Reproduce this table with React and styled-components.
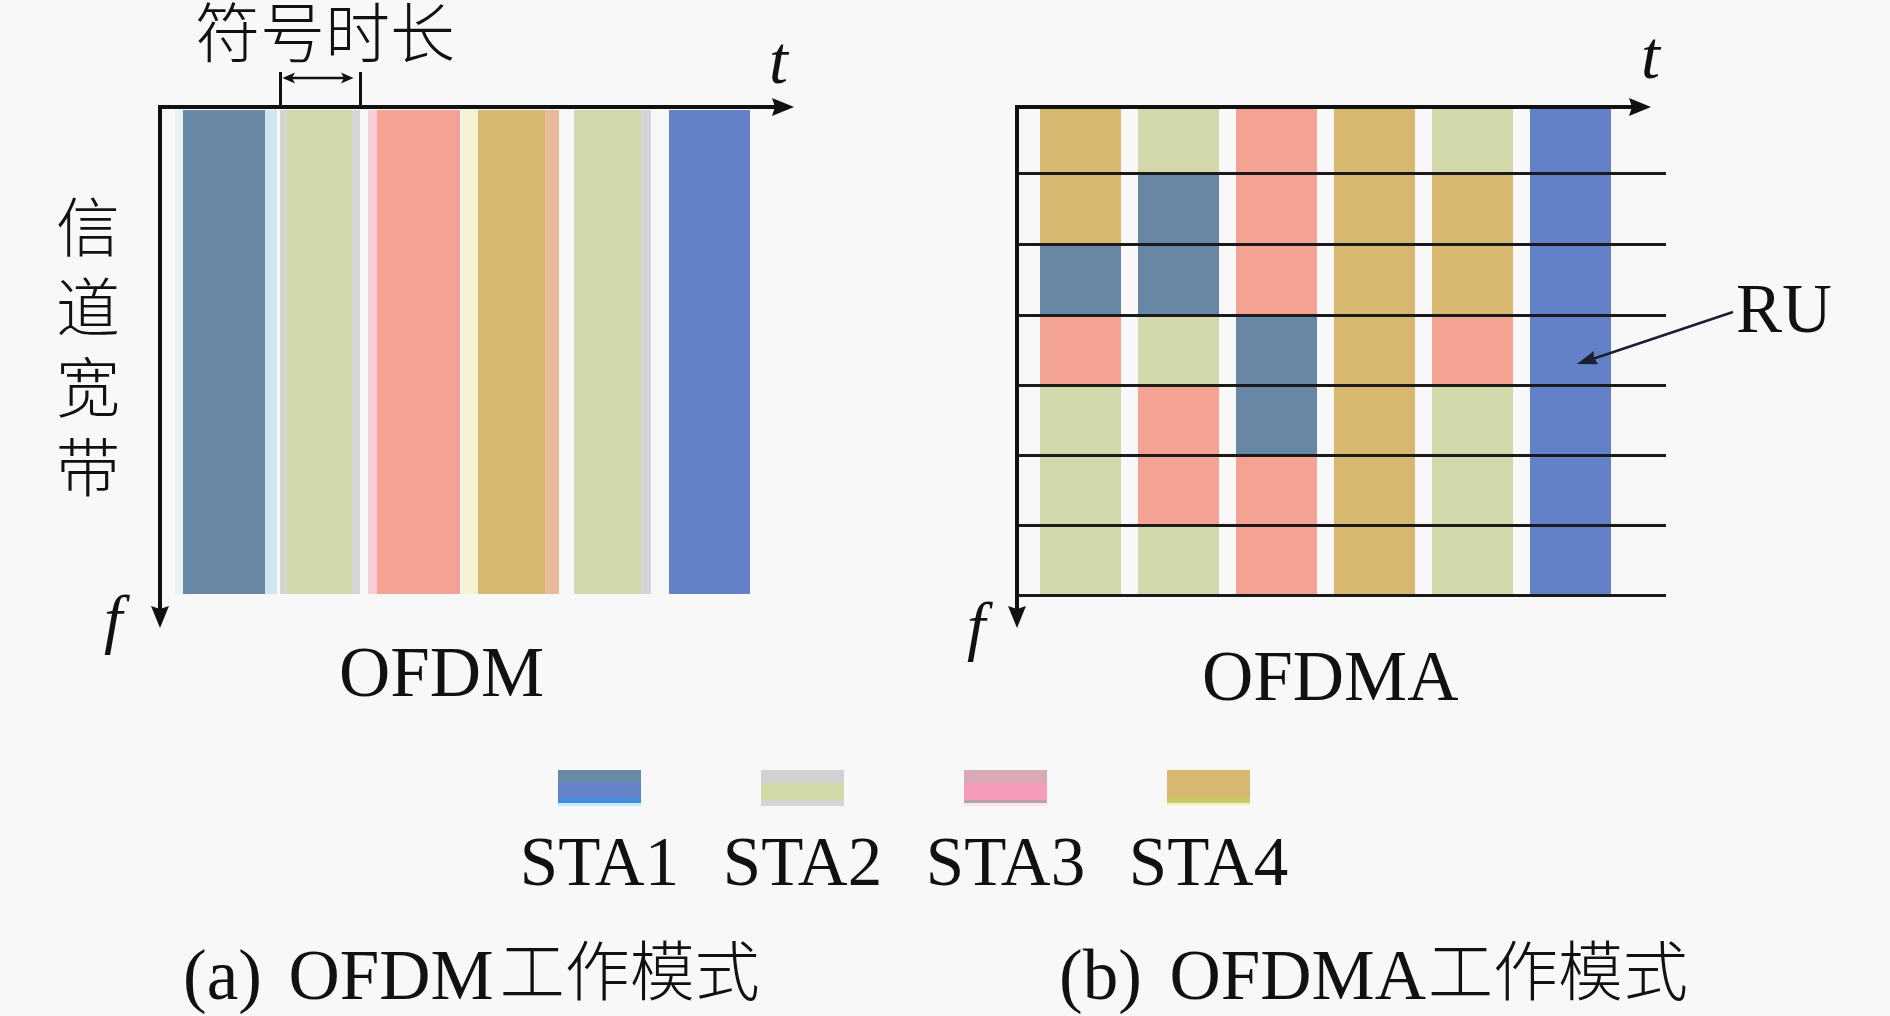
import React from 'react';
import styled, { createGlobalStyle } from 'styled-components';

// palette picked from the reference figure
const C = {
  steel: '#6787a5',
  corn: '#6381c8',
  sage: '#d3d8aa',
  salmon: '#f4a392',
  gold: '#d8b86f',
  ink: '#111',
  line: '#1b1b1b',
};

const GlobalStyle = createGlobalStyle`
  html, body {
    margin: 0;
    padding: 0;
    background: #f8f8f8;
  }
  body {
    font-family: 'Liberation Serif', 'Times New Roman', serif;
    color: ${C.ink};
  }
`;

const Page = styled.div`
  width: 1890px;
  height: 1016px;
  overflow: hidden;
  display: flex;
  flex-direction: column;
`;

const ChartsRow = styled.div`
  display: grid;
  grid-template-columns: 945px 945px;
  height: 720px;
  flex: none;
`;

const Figure = styled.div`
  position: relative;
  display: flex;
  align-items: flex-start;
`;

const AxisLabels = styled.div`
  width: ${(p) => p.$w}px;
  flex: none;
  display: flex;
  flex-direction: column;
  align-items: flex-start;
`;

// vertical axis title, one character under the other
const YLabel = styled.div`
  margin: 195px 0 0 56px;
  writing-mode: vertical-rl;
  text-orientation: upright;
  font-family: 'Noto Sans CJK SC', sans-serif;
  font-weight: 300;
  font-size: 64px;
  line-height: 64px;
  letter-spacing: 16px;
`;

const MathVar = styled.span`
  display: block;
  font-style: italic;
  font-size: 66px;
  line-height: 66px;
  margin-top: ${(p) => p.$top}px;
  margin-left: ${(p) => p.$left}px;
`;

const ChartColumn = styled.div`
  width: ${(p) => p.$w}px;
  flex: none;
  display: flex;
  flex-direction: column;
  align-items: flex-start;
`;

const Header = styled.div`
  height: 105px;
  flex: none;
  display: flex;
  align-items: flex-start;
`;

const TitleBlock = styled.div`
  width: 262px;
  margin-left: 37px;
  display: flex;
  flex-direction: column;
`;

const Title = styled.div`
  font-family: 'Noto Sans CJK SC', sans-serif;
  font-weight: 300;
  font-size: 65px;
  line-height: 58px;
  white-space: nowrap;
`;

const Bracket = styled.div`
  box-sizing: border-box;
  width: 83px;
  height: 33px;
  margin: 14px 0 0 84px;
  border-left: 3px solid ${C.ink};
  border-right: 3px solid ${C.ink};
  svg {
    display: block;
  }
`;

const TimeLabel = styled.span`
  display: block;
  font-style: italic;
  font-size: 68px;
  line-height: 68px;
  margin-top: ${(p) => p.$top}px;
  margin-left: ${(p) => p.$left}px;
`;

const Plot = styled.div`
  position: relative;
  box-sizing: border-box;
  width: 618px;
  height: 505px;
  flex: none;
  border-top: 4px solid ${C.ink};
  border-left: 4px solid ${C.ink};
`;

const ArrowRight = styled.svg`
  position: absolute;
  top: -11px;
  left: calc(100% - 4px);
`;

const ArrowDown = styled.svg`
  position: absolute;
  left: -11px;
  top: calc(100% - 4px);
`;

const Bars = styled.div`
  display: flex;
  height: 484px;
  padding-top: 1px;
`;

const Bar = styled.div`
  flex: none;
  width: ${(p) => p.$w}px;
  margin-left: ${(p) => p.$gap}px;
  background: ${(p) => p.$color};
  box-shadow: ${(p) => `${-p.$l[0]}px 0 0 ${p.$l[1]}, ${p.$r[0]}px 0 0 ${p.$r[1]}`};
`;

const GridRows = styled.div`
  width: 647px;
  display: flex;
  flex-direction: column;
`;

const GridRow = styled.div`
  height: ${(p) => p.$h}px;
  display: flex;
  gap: 17px;
  padding-left: 21px;
  border-bottom: 3px solid ${C.line};
`;

const Cell = styled.div`
  width: 81px;
  flex: none;
  background: ${(p) => p.$color};
`;

const ModeName = styled.div`
  font-size: 71px;
  line-height: 71px;
  margin-top: ${(p) => p.$top}px;
  margin-left: ${(p) => p.$left}px;
  white-space: nowrap;
`;

const Side = styled.div`
  margin: 275px 0 0 70px;
  font-size: 69px;
  line-height: 69px;
`;

const Callout = styled.svg`
  position: absolute;
  left: 615px;
  top: 300px;
`;

const LegendRow = styled.div`
  display: flex;
  padding: 50px 0 0 498px;
  flex: none;
`;

const LegendItem = styled.div`
  width: 203px;
  display: flex;
  flex-direction: column;
  align-items: center;
`;

const Swatch = styled.div`
  width: 83px;
  height: 36px;
  background: ${(p) => p.$fill};
`;

const LegendText = styled.div`
  margin-top: 22px;
  font-size: 69px;
  line-height: 69px;
`;

const CaptionRow = styled.div`
  display: grid;
  grid-template-columns: 876px auto;
  padding-left: 183px;
  margin-top: 43px;
`;

const Caption = styled.div`
  font-size: 71px;
  line-height: 71px;
  white-space: nowrap;
  word-spacing: ${(p) => p.$ws}px;
`;

const Cjk = styled.span`
  font-family: 'Noto Sans CJK SC', sans-serif;
  font-weight: 300;
  font-size: 65px;
  line-height: 0;
  vertical-align: 4px;
  margin-left: ${(p) => p.$gap || 0}px;
`;

const BARS = [
  { w: 82, gap: 21, color: C.steel, l: [8, '#e9f3f6'], r: [12, '#cde8f0'] },
  { w: 65, gap: 22, color: C.sage, l: [7, '#d6d6d6'], r: [8, '#d6d6d6'] },
  { w: 80, gap: 25, color: C.salmon, l: [9, '#f8cfdb'], r: [3, '#f39ab1'] },
  { w: 67, gap: 21, color: C.gold, l: [17, '#f5f4d2'], r: [14, '#e9bb9b'] },
  { w: 67, gap: 29, color: C.sage, l: [0, 'transparent'], r: [10, '#d6d6d6'] },
  { w: 81, gap: 28, color: C.corn, l: [0, 'transparent'], r: [0, 'transparent'] },
];

const S = C.steel, G = C.sage, P = C.salmon, Y = C.gold, B = C.corn;
const GRID = [
  { h: 63, cells: [Y, G, P, Y, G, B] },
  { h: 68, cells: [Y, S, P, Y, Y, B] },
  { h: 68, cells: [S, S, P, Y, Y, B] },
  { h: 67, cells: [P, G, S, Y, P, B] },
  { h: 67, cells: [G, P, S, Y, G, B] },
  { h: 67, cells: [G, P, P, Y, G, B] },
  { h: 67, cells: [G, G, P, Y, G, B] },
];

const LEGEND = [
  {
    name: 'STA1',
    fill: 'linear-gradient(180deg, #6a89a6 0 33%, #6581c8 33% 78%, #3f8fd8 78% 92%, #c4e8f5 92%)',
  },
  {
    name: 'STA2',
    fill: 'linear-gradient(180deg, #d1d1d1 0 35%, #d3d8a9 35% 84%, #d5d5d5 84%)',
  },
  {
    name: 'STA3',
    fill: 'linear-gradient(180deg, #d9aab6 0 35%, #f69bb9 35% 84%, #b3a5aa 84% 92%, #fbe3ea 92%)',
  },
  {
    name: 'STA4',
    fill: 'linear-gradient(180deg, #d8b870 0 78%, #c6cb63 78% 92%, #f7f2c8 92%)',
  },
];

const AxisArrows = () => (
  <>
    <ArrowRight width="22" height="18" viewBox="0 0 22 18">
      <path d="M0 0 L22 9 L0 18 L3 9 Z" fill={C.ink} />
    </ArrowRight>
    <ArrowDown width="18" height="22" viewBox="0 0 18 22">
      <path d="M0 0 L9 22 L18 0 L9 3 Z" fill={C.ink} />
    </ArrowDown>
  </>
);

const OfdmChart = () => (
  <Figure>
    <AxisLabels $w={158}>
      <YLabel>信道宽带</YLabel>
      <MathVar $top={71} $left={104}>f</MathVar>
    </AxisLabels>
    <ChartColumn $w={787}>
      <Header>
        <TitleBlock>
          <Title>符号时长</Title>
          <Bracket>
            <svg width="77" height="12" viewBox="0 0 77 12">
              <line x1="8" y1="6" x2="64" y2="6" stroke={C.ink} strokeWidth="2.6" />
              <path d="M0.5 6 L13 0.5 L10 6 L13 11.5 Z" fill={C.ink} />
              <path d="M71.5 6 L59 0.5 L62 6 L59 11.5 Z" fill={C.ink} />
            </svg>
          </Bracket>
        </TitleBlock>
        <TimeLabel $top={26} $left={312}>t</TimeLabel>
      </Header>
      <Plot>
        <Bars>
          {BARS.map((b, i) => (
            <Bar key={i} $w={b.w} $gap={b.gap} $color={b.color} $l={b.l} $r={b.r} />
          ))}
        </Bars>
        <AxisArrows />
      </Plot>
      <ModeName $top={27} $left={181}>OFDM</ModeName>
    </ChartColumn>
  </Figure>
);

const OfdmaChart = () => (
  <Figure>
    <AxisLabels $w={70}>
      <MathVar $top={593} $left={22}>f</MathVar>
    </AxisLabels>
    <ChartColumn $w={651}>
      <Header>
        <TimeLabel $top={21} $left={626}>t</TimeLabel>
      </Header>
      <Plot>
        <GridRows>
          {GRID.map((row, r) => (
            <GridRow key={r} $h={row.h}>
              {row.cells.map((c, i) => (
                <Cell key={i} $color={c} />
              ))}
            </GridRow>
          ))}
        </GridRows>
        <AxisArrows />
      </Plot>
      <ModeName $top={31} $left={187}>OFDMA</ModeName>
    </ChartColumn>
    <Side>RU</Side>
    <Callout width="190" height="80" viewBox="0 0 190 80">
      <line x1="173" y1="12" x2="34" y2="58.5" stroke="#1a2030" strokeWidth="2.6" />
      <path d="M17 64 L38.2 64.3 L33.8 57.6 L33.8 51.1 Z" fill="#1a2030" />
    </Callout>
  </Figure>
);

const App = () => (
  <Page>
    <GlobalStyle />
    <ChartsRow>
      <OfdmChart />
      <OfdmaChart />
    </ChartsRow>
    <LegendRow>
      {LEGEND.map((item) => (
        <LegendItem key={item.name}>
          <Swatch $fill={item.fill} />
          <LegendText>{item.name}</LegendText>
        </LegendItem>
      ))}
    </LegendRow>
    <CaptionRow>
      <Caption $ws={9}>
        (a) OFDM<Cjk $gap={6}>工作模式</Cjk>
      </Caption>
      <Caption $ws={10}>
        (b) OFDMA<Cjk $gap={2}>工作模式</Cjk>
      </Caption>
    </CaptionRow>
  </Page>
);

export default App;
